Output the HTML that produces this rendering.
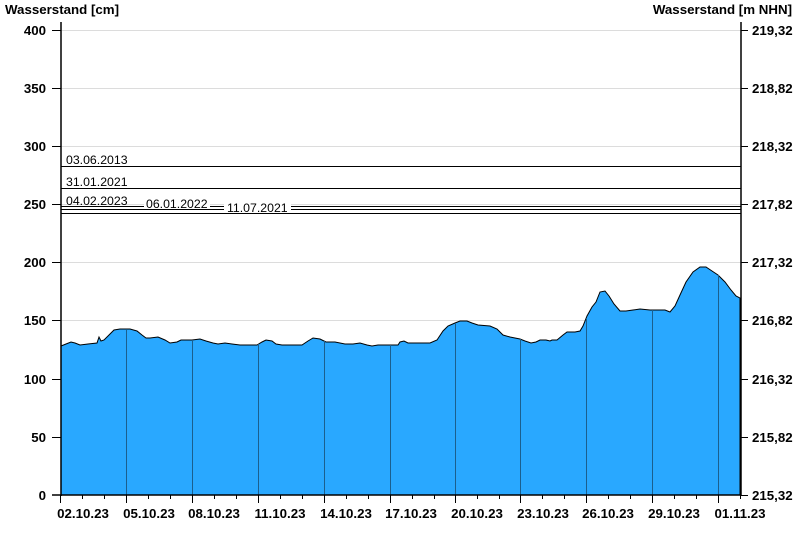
<!DOCTYPE html>
<html><head><meta charset="utf-8"><style>
html,body{margin:0;padding:0;background:#fff;width:800px;height:550px;overflow:hidden}
svg{display:block}
text{font-family:"Liberation Sans",Arial,sans-serif}
.b{font-weight:bold;font-size:13.3px;fill:#000}
.s{font-size:12.3px;fill:#000}
</style></head><body>
<svg width="800" height="550" viewBox="0 0 800 550" xmlns="http://www.w3.org/2000/svg">
<g stroke="#dcdcdc" stroke-width="1">
<line x1="61" y1="30.5" x2="741" y2="30.5"/>
<line x1="61" y1="88.5" x2="741" y2="88.5"/>
<line x1="61" y1="146.5" x2="741" y2="146.5"/>
<line x1="61" y1="204.5" x2="741" y2="204.5"/>
<line x1="61" y1="262.5" x2="741" y2="262.5"/>
<line x1="61" y1="320.5" x2="741" y2="320.5"/>
<line x1="61" y1="379.5" x2="741" y2="379.5"/>
<line x1="61" y1="437.5" x2="741" y2="437.5"/>
</g>
<path fill="#29a8ff" stroke="#000" stroke-width="1" d="M61,346 L66,344 L71,342 L75,343 L80,345 L88,344 L97,343 L99,337 L101,341 L104,340 L108,336 L114,330 L120,329 L130,329 L137,331 L142,335 L146,338 L150,338 L158,337 L165,340 L170,343 L177,342 L181,340 L192,340 L200,339 L206,341 L213,343 L218,344 L225,343 L232,344 L240,345 L257,345 L262,342 L266,340 L272,341 L276,344 L282,345 L293,345 L302,345 L308,341 L313,338 L320,339 L326,342 L335,342 L345,344 L353,344 L360,343 L367,345 L372,346 L378,345 L390,345 L398,345 L400,342 L404,341 L408,343 L420,343 L430,343 L437,340 L443,331 L448,326 L455,323 L460,321 L467,321 L472,323 L478,325 L490,326 L497,329 L503,335 L510,337 L520,339 L525,341 L531,343 L536,342 L540,340 L546,340 L550,341 L552,340 L557,340 L563,335 L567,332 L575,332 L580,331 L583,326 L587,316 L592,307 L596,302 L600,292 L605,291 L609,296 L614,304 L620,311 L626,311 L633,310 L640,309 L650,310 L665,310 L670,312 L675,306 L680,295 L686,282 L693,272 L700,267 L706,267 L712,271 L718,275 L725,282 L731,290 L736,296 L740,298 L740,495 L61,495 Z"/>
<g stroke="#1b5f8e" stroke-width="1">
<line x1="126.5" y1="330" x2="126.5" y2="495"/>
<line x1="192.5" y1="340" x2="192.5" y2="495"/>
<line x1="258.5" y1="344" x2="258.5" y2="495"/>
<line x1="324.5" y1="341" x2="324.5" y2="495"/>
<line x1="390.5" y1="345" x2="390.5" y2="495"/>
<line x1="455.5" y1="323" x2="455.5" y2="495"/>
<line x1="520.5" y1="339" x2="520.5" y2="495"/>
<line x1="586.5" y1="318" x2="586.5" y2="495"/>
<line x1="652.5" y1="310" x2="652.5" y2="495"/>
<line x1="718.5" y1="275" x2="718.5" y2="495"/>
</g>
<g stroke="#000" stroke-width="1">
<line x1="61" y1="166.5" x2="741" y2="166.5"/>
<line x1="61" y1="188.5" x2="741" y2="188.5"/>
<line x1="61" y1="206.5" x2="741" y2="206.5"/>
<line x1="61" y1="209.5" x2="741" y2="209.5"/>
<line x1="61" y1="213.5" x2="741" y2="213.5"/>
</g>
<rect x="144" y="199" width="66" height="10" fill="#fff"/>
<rect x="224" y="203" width="67" height="10" fill="#fff"/>
<text class="s" x="66" y="164">03.06.2013</text>
<text class="s" x="66" y="186">31.01.2021</text>
<text class="s" x="66" y="205">04.02.2023</text>
<text class="s" x="146" y="208">06.01.2022</text>
<text class="s" x="227" y="212">11.07.2021</text>
<g stroke="#000" stroke-width="1.5">
<line x1="61" y1="22" x2="61" y2="496"/>
<line x1="741" y1="22" x2="741" y2="496"/>
<line x1="52" y1="495" x2="741" y2="495"/>
</g>
<g stroke="#000" stroke-width="1">
<path d="M52,30.5H61M52,88.5H61M52,146.5H61M52,204.5H61M52,262.5H61M52,320.5H61M52,379.5H61M52,437.5H61"/>
<path d="M741,30.5H748M741,88.5H748M741,146.5H748M741,204.5H748M741,262.5H748M741,320.5H748M741,379.5H748M741,437.5H748M741,495.5H748"/>
<path d="M60.5,495V503M126.5,495V503M192.5,495V503M258.5,495V503M324.5,495V503M390.5,495V503M455.5,495V503M520.5,495V503M586.5,495V503M652.5,495V503M718.5,495V503"/>
<path d="M82.5,495V499M104.5,495V499M148.5,495V499M170.5,495V499M214.5,495V499M236.5,495V499M280.5,495V499M302.5,495V499M346.5,495V499M368.5,495V499M412.5,495V499M434.5,495V499M477.5,495V499M499.5,495V499M542.5,495V499M564.5,495V499M608.5,495V499M630.5,495V499M674.5,495V499M696.5,495V499M740.5,495V499"/>
</g>
<text class="b" x="5" y="14">Wasserstand [cm]</text>
<text class="b" x="792" y="14" text-anchor="end">Wasserstand [m NHN]</text>
<g class="b" text-anchor="end">
<text x="46" y="35">400</text>
<text x="46" y="93">350</text>
<text x="46" y="151">300</text>
<text x="46" y="209">250</text>
<text x="46" y="267">200</text>
<text x="46" y="325">150</text>
<text x="46" y="384">100</text>
<text x="46" y="442">50</text>
<text x="46" y="500">0</text>
</g>
<g class="b">
<text x="752" y="35">219,32</text>
<text x="752" y="93">218,82</text>
<text x="752" y="151">218,32</text>
<text x="752" y="209">217,82</text>
<text x="752" y="267">217,32</text>
<text x="752" y="325">216,82</text>
<text x="752" y="384">216,32</text>
<text x="752" y="442">215,82</text>
<text x="752" y="500">215,32</text>
</g>
<g class="b" text-anchor="middle">
<text x="83" y="518">02.10.23</text>
<text x="149" y="518">05.10.23</text>
<text x="214" y="518">08.10.23</text>
<text x="280" y="518">11.10.23</text>
<text x="346" y="518">14.10.23</text>
<text x="411" y="518">17.10.23</text>
<text x="477" y="518">20.10.23</text>
<text x="543" y="518">23.10.23</text>
<text x="608" y="518">26.10.23</text>
<text x="674" y="518">29.10.23</text>
<text x="740" y="518">01.11.23</text>
</g>
</svg>
</body></html>
